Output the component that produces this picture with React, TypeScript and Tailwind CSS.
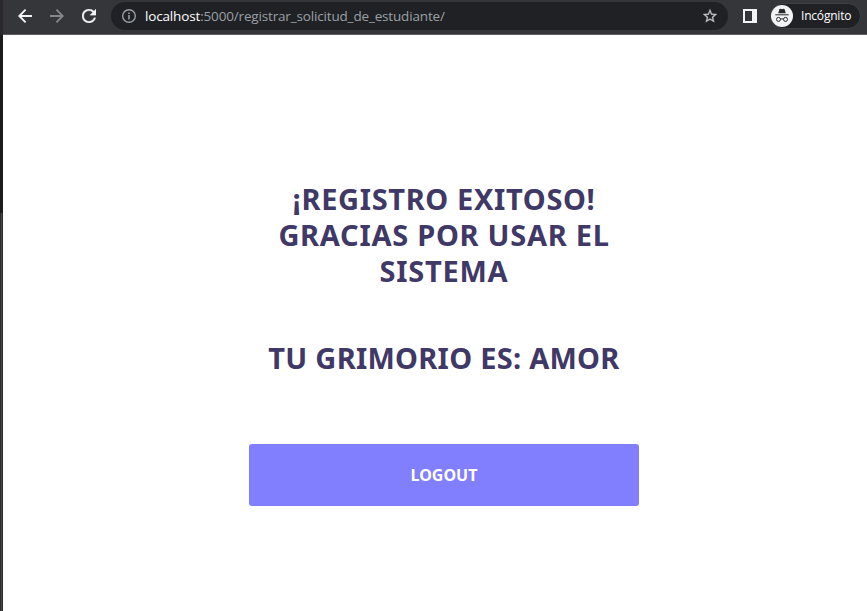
import React from "react";

function ArrowIcon({ className }: { className: string }) {
  return (
    <svg viewBox="0 0 14 14" className={className} fill="none" stroke="currentColor" strokeWidth="1.9">
      <path d="M14 7H1.6M7.6 .7L1.3 7l6.3 6.3" />
    </svg>
  );
}

function ReloadIcon() {
  return (
    <svg viewBox="4 4 16 16" className="ml-[18px] h-[14px] w-[14px] shrink-0 text-[#f1f3f4]" fill="currentColor" stroke="currentColor" strokeWidth="0.3">
      <path d="M17.65 6.35C16.2 4.9 14.21 4 12 4c-4.42 0-7.99 3.58-7.99 8s3.57 8 7.99 8c3.73 0 6.84-2.55 7.73-6h-2.08c-.82 2.33-3.04 4-5.65 4-3.31 0-6-2.69-6-6s2.69-6 6-6c1.66 0 3.14.69 4.22 1.78L13 11h7V4l-2.35 2.35z" />
    </svg>
  );
}

function IncognitoIcon() {
  return (
    <svg viewBox="0 0 22 22" className="h-[22px] w-[22px] shrink-0">
      <circle cx="11" cy="11" r="11" fill="#f1f3f4" />
      <path d="M7.2 8.3l1.2-4q.3-.8 1.1-.5l1.5.4 1.5-.4q.8-.3 1.1.5l1.2 4z" fill="#292a2d" />
      <path d="M4.3 9.8h13.4" stroke="#292a2d" strokeWidth="1" />
      <g fill="none" stroke="#292a2d" strokeWidth="1">
        <circle cx="7.5" cy="14.4" r="2" />
        <circle cx="14.5" cy="14.4" r="2" />
        <path d="M9.5 14.2q1.5-.8 3 0" />
      </g>
    </svg>
  );
}

function Toolbar() {
  return (
    <header className="flex h-[35px] shrink-0 items-start border-b border-[#5c5c61] bg-[#35363a]">
      <div className="h-[35px] w-[3px] shrink-0 bg-[#29292c]" />
      <div className="mt-[2px] flex h-7 w-[108px] shrink-0 items-center pl-[15px]">
        <ArrowIcon className="h-[14px] w-[14px] shrink-0 text-[#f1f3f4]" />
        <ArrowIcon className="ml-[18px] h-[14px] w-[14px] shrink-0 rotate-180 text-[#86878a]" />
        <ReloadIcon />
      </div>
      <div className="mt-[2px] flex h-7 w-[617px] shrink-0 items-center rounded-full bg-[#202124] pl-[11px] pr-[11px]">
        <svg viewBox="0 0 14 14" className="h-[14px] w-[14px] shrink-0 text-[#9aa0a6]" fill="none" stroke="currentColor" strokeWidth="1.4">
          <circle cx="7" cy="7" r="6.3" />
          <path d="M7 6v4.5M7 3.5V5" strokeWidth="1.6" />
        </svg>
        <p className="ml-[9px] flex-1 whitespace-nowrap font-['Open_Sans',sans-serif] text-[13.5px] leading-7 tracking-[-0.16px] text-[#9aa0a6]">
          <span className="text-white">localhost</span>:5000/registrar_solicitud_de_estudiante/
        </p>
        <svg viewBox="2 2 20 20" className="h-[14px] w-[14px] shrink-0 text-[#c0c3c6]" fill="currentColor" stroke="currentColor" strokeWidth="0.4">
          <path d="M22 9.24l-7.19-.62L12 2 9.19 8.63 2 9.24l5.46 4.73L5.82 21 12 17.27 18.18 21l-1.63-7.03L22 9.24zM12 15.4l-3.76 2.27 1-4.28-3.32-2.88 4.38-.38L12 6.1l1.71 4.04 4.38.38-3.32 2.88 1 4.28L12 15.4z" />
        </svg>
      </div>
      <div className="ml-[15px] mt-[9px] h-[14px] w-[14px] shrink-0 border-2 border-r-[5px] border-[#f1f3f4]" />
      <div className="ml-[13px] mt-[3px] flex h-[26px] w-[91px] shrink-0 items-center rounded-full border border-[#3f4044] bg-[#202124]">
        <IncognitoIcon />
        <span className="ml-[8px] font-['Open_Sans',sans-serif] text-[12px] tracking-[-0.2px] text-white">Incógnito</span>
      </div>
    </header>
  );
}

export default function App() {
  return (
    <div className="flex h-[611px] w-[867px] flex-col overflow-hidden bg-white">
      <Toolbar />
      <div className="flex flex-1">
        <div className="flex w-[3px] shrink-0 flex-col">
          <div className="h-[178px] bg-[#1c1c1d]" />
          <div className="flex-1 border-x border-[#29292a] bg-[#49494a]" />
        </div>
        <main className="flex flex-1 flex-col items-center pl-[18px] pt-[146px] font-['Noto_Sans',sans-serif] font-bold text-[#403866]">
          <h1 className="flex flex-col items-center whitespace-nowrap text-[29px] leading-9">
            <span className="tracking-[0.65px]">¡REGISTRO EXITOSO!</span>
            <span className="tracking-[0.72px]">GRACIAS POR USAR EL</span>
            <span className="tracking-[0.75px]">SISTEMA</span>
          </h1>
          <h2 className="mt-[51px] whitespace-nowrap text-[29px] leading-9 tracking-[0.27px]">TU GRIMORIO ES: AMOR</h2>
          <button className="mt-[68px] h-[62px] w-[390px] rounded-[3px] bg-[#827ffe] pb-px text-[16px] text-white">LOGOUT</button>
        </main>
      </div>
    </div>
  );
}
